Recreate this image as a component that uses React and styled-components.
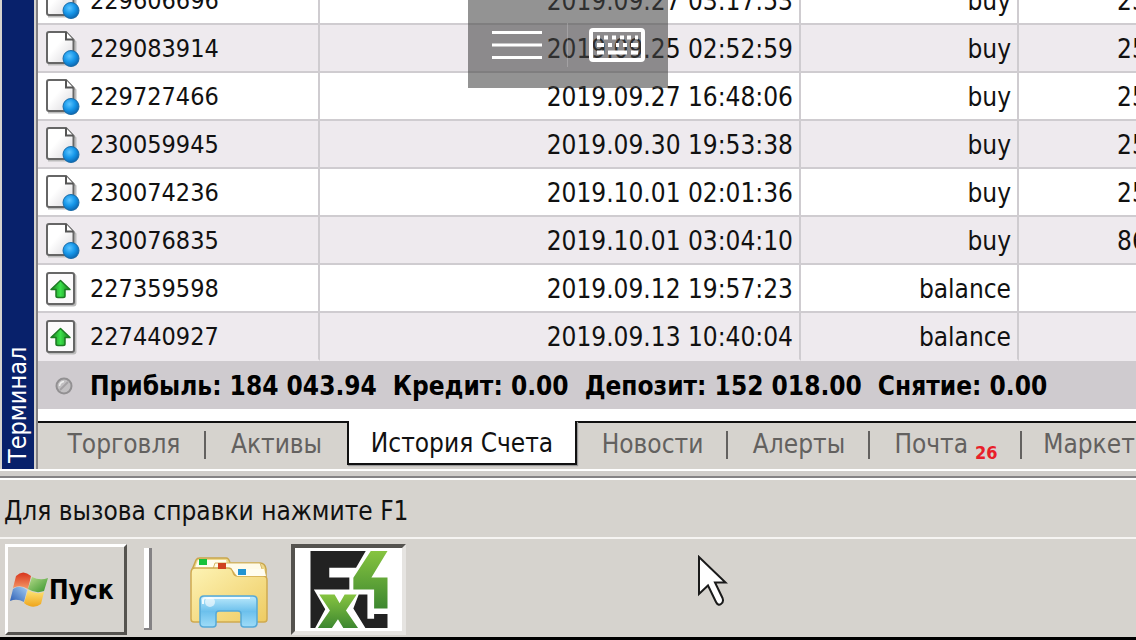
import React from "react";
import styled, { createGlobalStyle, css } from "styled-components";

const face = "#d6d3ce";
const grid = "#cfccd0";

const GlobalStyle = createGlobalStyle`
  * { box-sizing: border-box; }
  body {
    margin: 0;
    overflow: hidden;
    background: ${face};
    color: #111;
    font-family: "DejaVu Sans Condensed", "DejaVu Sans", sans-serif;
    font-size: 26px;
    line-height: 30px;
  }
  button { font: inherit; color: inherit; border: 0; padding: 0; margin: 0; background: none; }
`;

const Desktop = styled.div`
  position: relative;
  display: flex;
  flex-direction: column;
  height: 100vh;
  overflow: hidden;
  white-space: nowrap;
`;

const Terminal = styled.main`
  display: flex;
  flex: 1;
  min-height: 0;
  padding-left: 2px;
`;

const SideCaption = styled.aside`
  flex: none;
  width: 32px;
  padding-top: 6px;
  color: #fff;
  background: #08216b;
  font-size: 25px;
  line-height: 32px;
  writing-mode: vertical-rl;
  transform: rotate(180deg);
`;

const Pane = styled.section`
  display: flex;
  flex: 1;
  flex-direction: column;
  min-width: 0;
  margin-left: 2px;
  border-left: 2px solid #848284;
`;

const TableArea = styled.div`
  display: flex;
  flex: 1;
  flex-direction: column;
  justify-content: flex-end;
  min-height: 0;
  overflow: hidden;
  background: #fff;
  padding-bottom: 12px;
`;

const Table = styled.table`
  flex: none;
  width: 100%;
  table-layout: fixed;
  border-collapse: separate;
  border-spacing: 0;
`;

const Col = styled.col`
  width: ${(p) => p.$w};
`;

const Row = styled.tr`
  height: 48px;
  background: #fff;
  &:nth-child(even) { background: #eeeaee; }
`;

const Cell = styled.td`
  height: 48px;
  padding: 2px 6px 0 8px;
  overflow: hidden;
  text-align: ${(p) => p.$align || "right"};
  border-right: 2px solid ${grid};
  border-bottom: 2px solid ${grid};
  &:last-child { border-right: 0; padding: 2px 0 0 98px; }
  tr:last-child > & { border-bottom-color: #eeeaee; }
`;

const Ticket = styled.div`
  display: flex;
  align-items: center;
  gap: 10px;
  font-size: 25px;
  svg { flex: none; }
`;

const Summary = styled.div`
  display: flex;
  flex: none;
  align-items: center;
  gap: 16px;
  height: 48px;
  padding: 2px 0 0 16px;
  font-weight: bold;
  background: #cfcbcf;
  color: #000;
`;

const Totals = styled.div`
  display: flex;
  gap: 16px;
`;

const Tabs = styled.nav`
  display: flex;
  flex: none;
  height: 48px;
  padding-left: 4px;
  border-top: 2px solid #111;
  color: #63615f;
`;

const Tab = styled.button`
  position: relative;
  display: flex;
  flex: none;
  align-items: center;
  justify-content: center;
  width: ${(p) => p.$w}px;
  height: 42px;
  &::after {
    content: "";
    position: absolute;
    right: 0;
    top: 8px;
    width: 2px;
    height: 28px;
    background: ${(p) => (p.$rule ? "#63615f" : "transparent")};
  }
  ${(p) =>
    p.$active &&
    css`
      height: 44px;
      margin-top: -2px;
      padding-top: 2px;
      color: #111;
      background: #fff;
      border: 2px solid #111;
      border-top: 0;
      box-shadow: 1px 1px 1px #999;
    `}
`;

const Count = styled.sup`
  align-self: flex-end;
  margin-left: 7px;
  font-size: 18px;
  line-height: 24px;
  font-weight: bold;
  color: #e8202a;
`;

const Divider = styled.div`
  flex: none;
  height: 12px;
  background: linear-gradient(#fff 0 2px, #d0cdca 2px 7px, #848284 7px 9px, #fff 9px 11px, ${face} 11px);
`;

const StatusBar = styled.footer`
  flex: none;
  height: 58px;
  padding: 15px 4px 0;
  border-bottom: 2px solid #f6f4f2;
`;

const Taskbar = styled.div`
  display: flex;
  flex: none;
  align-items: flex-start;
  height: 101px;
  padding: 5px 5px 0;
  border-bottom: 3px solid #000;
`;

const StartButton = styled.button`
  display: flex;
  align-items: center;
  width: 122px;
  height: 91px;
  padding-left: 2px;
  font-weight: bold;
  color: #000;
  border: 3px solid;
  border-color: #fff #55534f #55534f #fff;
`;

const Grip = styled.div`
  width: 8px;
  height: 82px;
  margin: 4px 0 0 17px;
  background: #fff;
  border: solid #848284;
  border-width: 0 3px 2px 0;
`;

const Launcher = styled.button`
  display: flex;
  margin: 13px 0 0 38px;
`;

const TaskButton = styled.button`
  display: flex;
  align-items: center;
  justify-content: center;
  width: 115px;
  height: 91px;
  margin-left: 23px;
  background: #fff;
  border: 4px solid;
  border-color: #55534f #e6e4e1 #e6e4e1 #55534f;
`;

const RemoteBar = styled.div`
  position: absolute;
  top: 0;
  left: 468px;
  display: flex;
  align-items: center;
  width: 200px;
  height: 88px;
  padding: 2px 2px 0 0;
  background: rgba(69, 69, 69, 0.58);
`;

const RemoteButton = styled.button`
  display: flex;
  flex: 1;
  align-items: center;
  justify-content: center;
  height: 44px;
  & + & { border-left: 1px solid rgba(255, 255, 255, 0.2); }
`;

const Pointer = styled.div`
  position: absolute;
  top: 555px;
  left: 697px;
  display: flex;
`;

const OrderIcon = () => (
  <svg width="34" height="38" viewBox="0 0 34 38" aria-hidden="true">
    <defs>
      <linearGradient id="page" x1="0" y1="0" x2="1" y2="1">
        <stop offset="0.4" stopColor="#fff" />
        <stop offset="1" stopColor="#d8d6da" />
      </linearGradient>
      <radialGradient id="ball" cx="0.4" cy="0.35" r="0.7">
        <stop offset="0" stopColor="#5cc4ff" />
        <stop offset="0.5" stopColor="#1798ea" />
        <stop offset="1" stopColor="#0a62ac" />
      </radialGradient>
    </defs>
    <path d="M3 3.500H21L29.500 12V34.500H3Z" fill="none" stroke="#bbb" strokeWidth="2" />
    <path d="M3 2H20L27.500 10V30.500Q27.500 33 25 33H3Q1 33 1 31V4Q1 2 3 2Z" fill="url(#page)" stroke="#666" strokeWidth="2" />
    <path d="M20 2V9.500H27" fill="#fff" stroke="#555" strokeWidth="2" />
    <circle cx="25" cy="28.500" r="8" fill="url(#ball)" stroke="#1a6ca8" />
  </svg>
);

const BalanceIcon = () => (
  <svg width="34" height="36" viewBox="0 0 34 36" aria-hidden="true">
    <defs>
      <linearGradient id="up" x1="0" y1="0" x2="1" y2="0">
        <stop offset="0" stopColor="#14801a" />
        <stop offset="0.5" stopColor="#3be04a" />
        <stop offset="1" stopColor="#14801a" />
      </linearGradient>
    </defs>
    <rect x="2.500" y="3.500" width="27" height="31" rx="2" fill="none" stroke="#bbb" strokeWidth="2" />
    <rect x="1" y="2" width="27" height="31" rx="2" fill="#fbfafb" stroke="#666" strokeWidth="2" />
    <path d="M14.500 9.500L24 18.500H19V25Q19 26.500 17 26.500H12Q10 26.500 10 25V18.500H5Z" fill="url(#up)" stroke="#1c7a22" strokeWidth="1.500" strokeLinejoin="round" />
  </svg>
);

const NeutralIcon = () => (
  <svg width="20" height="20" viewBox="0 0 20 20" aria-hidden="true">
    <circle cx="10" cy="10" r="7.500" fill="#c2c0c2" stroke="#929092" strokeWidth="2" />
    <path d="M6 14L14 6" stroke="#a4a2a4" strokeWidth="2" />
    <path d="M5.500 10Q6 6 10 5.500" fill="none" stroke="#eee" strokeWidth="1.500" />
  </svg>
);

const FlagIcon = () => (
  <svg width="39" height="36" viewBox="0 0 39 36" aria-hidden="true">
    <defs>
      <linearGradient id="fr" x1="0" y1="0" x2="0" y2="1"><stop offset="0" stopColor="#d8341c" /><stop offset="1" stopColor="#f59a68" /></linearGradient>
      <linearGradient id="fg" x1="0" y1="0" x2="1" y2="1"><stop offset="0" stopColor="#b8dc8c" /><stop offset="1" stopColor="#38942c" /></linearGradient>
      <linearGradient id="fb" x1="0" y1="1" x2="1" y2="0"><stop offset="0" stopColor="#2a5cb4" /><stop offset="1" stopColor="#a4cdf2" /></linearGradient>
      <linearGradient id="fy" x1="0" y1="0" x2="0" y2="1"><stop offset="0" stopColor="#ffe67a" /><stop offset="1" stopColor="#eea41c" /></linearGradient>
    </defs>
    <path d="M6 4Q13 -3 21 4L18 17Q10 12 3 16Z" fill="url(#fr)" />
    <path d="M22 5Q30 9 38 6L34 19Q26 22 18 17Z" fill="url(#fg)" />
    <path d="M3 17Q10 12 17 18L14 30Q7 26 0 29Z" fill="url(#fb)" />
    <path d="M18 18Q26 23 34 20L31 32Q23 38 14 31Z" fill="url(#fy)" />
  </svg>
);

const FolderIcon = () => (
  <svg width="78" height="72" viewBox="0 0 78 72" aria-hidden="true">
    <defs>
      <linearGradient id="fold" x1="0" y1="0" x2="1" y2="1">
        <stop offset="0" stopColor="#fdf3b4" />
        <stop offset="1" stopColor="#eecb62" />
      </linearGradient>
      <linearGradient id="stand" x1="0" y1="0" x2="0" y2="1">
        <stop offset="0" stopColor="#bdeafc" />
        <stop offset="0.5" stopColor="#6cc0ec" />
        <stop offset="1" stopColor="#9fdcf8" />
      </linearGradient>
    </defs>
    <path d="M2 64V13L6 3Q7 1 10 1H36Q39 1 40 6H70Q75 6 76 12V64Z" fill="#efd98c" stroke="#c9a64c" strokeWidth="1.500" />
    <path d="M8 3H36L38 11H5Z" fill="#fffdf0" />
    <rect x="9" y="2" width="8" height="6" fill="#17c23c" />
    <path d="M25 6H70L73 15H22Z" fill="#fffbe8" stroke="#d6b868" />
    <path d="M1 16Q1 11 5 11H38Q42 11 43 15T48 19H73Q77 19 77 23V62Q77 65 74 65H4Q1 65 1 62Z" fill="url(#fold)" stroke="#d0aa50" strokeWidth="1.500" />
    <rect x="28" y="6" width="8" height="6" fill="#cf4220" />
    <path d="M42 12H74L76 19H47Z" fill="#fffdf0" />
    <rect x="48" y="12" width="8" height="6" fill="#2294d2" />
    <path d="M10 43Q10 39 14 39H63Q67 39 67 43V66Q67 70 63 70H54Q51 70 51 67V57Q51 54 48 54H29Q26 54 26 57V67Q26 70 23 70H14Q10 70 10 66Z" fill="url(#stand)" stroke="#56a9d8" strokeWidth="1.500" />
    <path d="M13 47V43Q13 41 16 41H60" fill="none" stroke="#effbff" strokeWidth="2" />
    <circle cx="20" cy="45" r="5" fill="#fff" opacity="0.600" />
  </svg>
);

const BrandIcon = () => (
  <svg width="78" height="77" viewBox="32 18 230 230" aria-hidden="true">
    <defs>
      <linearGradient id="lime" x1="0" y1="0" x2="0" y2="1">
        <stop offset="0" stopColor="#86c440" />
        <stop offset="1" stopColor="#3d8730" />
      </linearGradient>
    </defs>
    <path d="M32 18H197L168 68H88V97H148V133H42L76 192L46 248H32Z" fill="#222" />
    <path d="M212 18H262L214 97H262V190H222V133H160V98Z" fill="url(#lime)" />
    <path d="M58 148H104L119 174L134 148H170L138 196L174 248H130L114 222L96 248H54L90 196Z" fill="url(#lime)" />
    <path d="M176 148H202V220H222V206H262V248H196L160 190Z" fill="#222" />
  </svg>
);

const MenuIcon = () => (
  <svg width="50" height="30" viewBox="0 0 50 30" aria-hidden="true">
    <path d="M0 2.500H50M0 15H50M0 27.500H50" stroke="#fff" strokeWidth="3" />
  </svg>
);

const KeyboardIcon = () => (
  <svg width="56" height="34" viewBox="0 0 56 34" aria-hidden="true">
    <rect x="2" y="2" width="52" height="30" rx="2" fill="none" stroke="#fff" strokeWidth="4" />
    <path
      d="M8 9.500H11M15 9.500H19M23 9.500H27M31 9.500H35M38 9.500H42M46 9.500H49M8 17H15M19 17H23M27 17H30M34 17H38M42 17H49M8 24.500H15M19 24.500H38M42 24.500H49"
      stroke="#fff"
      strokeWidth="4"
    />
  </svg>
);

const PointerIcon = () => (
  <svg width="32" height="54" viewBox="0 0 32 54" aria-hidden="true">
    <path d="M2 2V39L11 30.500L19 47Q21 51 24 49T25.500 43L18 27.500H28.500Z" fill="#fff" stroke="#1a1a1a" strokeWidth="2" />
  </svg>
);

const orders = [
  ["229606696", "2019.09.27 03:17:53", "buy", "25"],
  ["229083914", "2019.09.25 02:52:59", "buy", "25"],
  ["229727466", "2019.09.27 16:48:06", "buy", "25"],
  ["230059945", "2019.09.30 19:53:38", "buy", "25"],
  ["230074236", "2019.10.01 02:01:36", "buy", "25"],
  ["230076835", "2019.10.01 03:04:10", "buy", "86"],
  ["227359598", "2019.09.12 19:57:23", "balance", ""],
  ["227440927", "2019.09.13 10:40:04", "balance", ""],
];

const tabs = [
  { label: "Торговля", width: 164, rule: true },
  { label: "Активы", width: 141 },
  { label: "История Счета", width: 230, active: true },
  { label: "Новости", width: 151, rule: true },
  { label: "Алерты", width: 142, rule: true },
  { label: "Почта", width: 152, rule: true, count: 26 },
  { label: "Маркет", width: 134 },
];

const totals = ["Прибыль: 184 043.94", "Кредит: 0.00", "Депозит: 152 018.00", "Снятие: 0.00"];

export default function App() {
  return (
    <>
      <GlobalStyle />
      <Desktop>
        <Terminal>
          <SideCaption>Терминал</SideCaption>
          <Pane>
            <TableArea>
              <Table>
                <colgroup>
                  <Col $w="282px" />
                  <Col $w="481px" />
                  <Col $w="218px" />
                  <Col $w="auto" />
                </colgroup>
                <tbody>
                  {orders.map(([id, time, type, size]) => (
                    <Row key={id}>
                      <Cell $align="left">
                        <Ticket>
                          {type === "buy" ? <OrderIcon /> : <BalanceIcon />}
                          {id}
                        </Ticket>
                      </Cell>
                      <Cell>{time}</Cell>
                      <Cell>{type}</Cell>
                      <Cell $align="left">{size}</Cell>
                    </Row>
                  ))}
                </tbody>
              </Table>
              <Summary>
                <NeutralIcon />
                <Totals>
                  {totals.map((t) => (
                    <span key={t}>{t}</span>
                  ))}
                </Totals>
              </Summary>
            </TableArea>
            <Tabs>
              {tabs.map((t) => (
                <Tab key={t.label} type="button" $w={t.width} $active={t.active} $rule={t.rule}>
                  {t.label}
                  {t.count && <Count>{t.count}</Count>}
                </Tab>
              ))}
            </Tabs>
          </Pane>
        </Terminal>
        <Divider />
        <StatusBar>Для вызова справки нажмите F1</StatusBar>
        <Taskbar>
          <StartButton type="button">
            <FlagIcon />
            Пуск
          </StartButton>
          <Grip />
          <Launcher type="button" aria-label="Проводник">
            <FolderIcon />
          </Launcher>
          <TaskButton type="button" aria-label="Терминал">
            <BrandIcon />
          </TaskButton>
        </Taskbar>
        <RemoteBar>
          <RemoteButton type="button" aria-label="Меню">
            <MenuIcon />
          </RemoteButton>
          <RemoteButton type="button" aria-label="Клавиатура">
            <KeyboardIcon />
          </RemoteButton>
        </RemoteBar>
        <Pointer>
          <PointerIcon />
        </Pointer>
      </Desktop>
    </>
  );
}
